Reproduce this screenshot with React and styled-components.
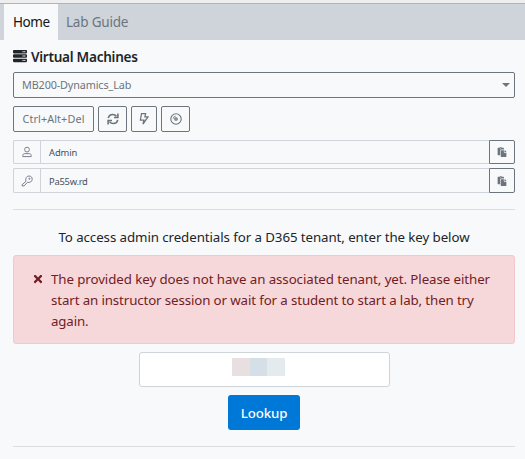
import React from "react";
import styled, { createGlobalStyle } from "styled-components";
import { FaServer, FaPaste, FaTimes } from "react-icons/fa";

const GlobalStyle = createGlobalStyle`
  *, *::before, *::after { box-sizing: border-box; }
  body {
    margin: 0;
    background: #f8f9fb;
    color: #212529;
    font-family: "Noto Sans", "Open Sans", sans-serif;
    font-size: 14px;
    line-height: 21px;
    overflow: hidden;
  }
  svg { display: block; flex: none; }
`;

const Page = styled.main`
  height: 459px;
  display: flex;
  flex-direction: column;
`;

const TopEdge = styled.div`
  height: 4px;
  background: #eeeeee;
  border-bottom: 1px solid #b1b5b9;
`;

const TabBar = styled.nav`
  display: flex;
  height: 36px;
  padding-left: 4px;
  background: #ced4da;
`;

const Tab = styled.a`
  display: flex;
  align-items: center;
  padding: 0 8px ${(p) => (p.$active ? "0 9px" : "0 8px")};
  font-size: 13.5px;
  letter-spacing: ${(p) => (p.$active ? "-0.4px" : "-0.2px")};
  white-space: nowrap;
  color: ${(p) => (p.$active ? "#111418" : "#6c757d")};
  background: ${(p) => (p.$active ? "#f8f9fb" : "transparent")};
  width: ${(p) => p.$width};
`;

const Content = styled.section`
  display: flex;
  flex-direction: column;
  padding: 0 10px 0 13px;
`;

const Heading = styled.h1`
  display: flex;
  align-items: center;
  gap: 4px;
  height: 32px;
  margin: 0;
  font-size: 13.6px;
  font-weight: 600;
  letter-spacing: -0.28px;
`;

const Select = styled.div`
  display: flex;
  align-items: center;
  justify-content: space-between;
  height: 26px;
  padding: 0 4px 1px 8px;
  border: 1px solid #6c757d;
  border-radius: 2px;
  color: #6c757d;
  font-size: 10.8px;
  letter-spacing: -0.12px;
`;

const Caret = styled.span`
  border: 4px solid transparent;
  border-top-color: #6c757d;
  border-bottom: 0;
`;

const Toolbar = styled.div`
  display: flex;
  gap: 4px;
  margin: 8px 0;
`;

const ToolButton = styled.button`
  display: flex;
  align-items: center;
  justify-content: center;
  width: ${(p) => p.$width}px;
  height: 26px;
  padding: 0 0 1px;
  border: 1px solid #6c757d;
  border-radius: 2px;
  background: transparent;
  color: #6c757d;
  font: 10.8px "Noto Sans", sans-serif;
  letter-spacing: 0.12px;
  white-space: nowrap;
`;

const Field = styled.div`
  display: flex;
  height: ${(p) => p.$height}px;
  margin-bottom: 4px;
`;

const FieldIcon = styled.span`
  display: flex;
  align-items: center;
  justify-content: center;
  width: 27px;
  border: 1px solid #ced4da;
  border-radius: 2px 0 0 2px;
  border-right: 0;
  color: #7d7f91;
`;

const FieldValue = styled.span`
  flex: 1;
  display: flex;
  align-items: center;
  padding: 1px 0 0 8px;
  border: 1px solid #ced4da;
  border-right: 0;
  color: #495057;
  font-size: 9.4px;
  letter-spacing: ${(p) => p.$spacing || "-0.1px"};
`;

const CopyButton = styled.button`
  display: flex;
  align-items: center;
  justify-content: center;
  width: 26px;
  padding: 0;
  border: 1px solid #6c757d;
  border-radius: 0 2px 2px 0;
  background: transparent;
  color: #6c757d;
`;

const Rule = styled.hr`
  width: 100%;
  height: 1px;
  margin: ${(p) => p.$top}px 0 0;
  border: 0;
  background: #dcdee1;
`;

const Prompt = styled.p`
  margin: 17px 0 7px;
  text-align: center;
  font-size: 13.3px;
  letter-spacing: -0.08px;
  white-space: nowrap;
`;

const Alert = styled.div`
  display: flex;
  gap: 7px;
  height: 89px;
  padding: 13px 0 0 18px;
  border: 1px solid #f5c6cb;
  border-radius: 3px;
  background: #f6d7da;
  color: #721c24;
  font-size: 13.3px;
  white-space: nowrap;

  svg { margin-top: 4px; }
`;

const Lines = styled.div`
  display: flex;
  flex-direction: column;
`;

const Line = styled.span`
  letter-spacing: ${(p) => p.$spacing}px;
`;

const KeyInput = styled.div`
  align-self: center;
  display: flex;
  justify-content: center;
  width: 251px;
  height: 35px;
  margin-top: 8px;
  padding: 5px 12px 0 0;
  border: 1px solid #ced4da;
  border-radius: 3px;
  background: #fff;
`;

const Block = styled.span`
  width: ${(p) => p.$width}px;
  height: 18px;
  background: ${(p) => p.$color};
`;

const Lookup = styled.button`
  align-self: center;
  width: 72px;
  height: 35px;
  margin-top: 8px;
  padding: 1px 0 0;
  border: 0;
  border-radius: 3px;
  background: #0078d7;
  color: #fff;
  font: 500 13.3px "Noto Sans", sans-serif;
  letter-spacing: -0.15px;
`;

const stroke = { fill: "none", stroke: "currentColor", strokeWidth: 1 };

const RefreshIcon = () => (
  <svg width="12" height="12" viewBox="0 0 12 12" {...stroke} strokeWidth="1.6">
    <path d="M1.3 5.2C1.7 2.9 3.6 1.5 5.8 1.5c1.5 0 2.7.6 3.7 1.8M10.7 6.800c-.4 2.3-2.3 3.7-4.5 3.7-1.5 0-2.7-.6-3.7-1.8" />
    <path d="M10.900.6v3.900H7M1.100 11.400V7.500H5" />
  </svg>
);
const BoltIcon = () => (
  <svg width="10" height="12" viewBox="0 0 10 12" {...stroke} strokeWidth="1.25">
    <path d="M2.500.7h4.100L5.900 3.900h3L4 11.200 4.900 7H1.400z" />
  </svg>
);
const DiscIcon = () => (
  <svg width="12" height="12" viewBox="0 0 12 12" {...stroke}>
    <circle cx="6" cy="6" r="5.2" strokeWidth="1.1" />
    <circle cx="6" cy="6" r="1.2" strokeWidth="1.3" />
    <path d="M3.100 5.800A2.900 2.900 0 0 1 5.800 3.100" strokeWidth=".8" />
  </svg>
);
const UserIcon = () => (
  <svg width="10" height="12" viewBox="0 0 10 12" {...stroke}>
    <circle cx="5" cy="3.6" r="2.4" />
    <path d="M.8 10.600V9.500c0-1.200.9-1.900 2-1.900h4.400c1.100 0 2 .7 2 1.900v1.100z" />
  </svg>
);
const KeyIcon = () => (
  <svg width="12" height="12" viewBox="0 0 12 12" {...stroke}>
    <path d="M4.900 6.300C4.200 3.500 5.400 1 8 1c2 0 3.200 1.300 3.200 3.100C11.200 6.600 8.900 8 6.400 7.300L3.100 10.900H1V9.800z" />
    <circle cx="8.400" cy="3.700" r=".6" />
  </svg>
);

const LINES = [
  { text: "The provided key does not have an associated tenant, yet. Please either", spacing: -0.08 },
  { text: "start an instructor session or wait for a student to start a lab, then try", spacing: -0.12 },
  { text: "again.", spacing: -0.15 },
];

export default function App() {
  return (
    <Page>
      <GlobalStyle />
      <TopEdge />
      <TabBar>
        <Tab $active $width="54px">Home</Tab>
        <Tab $width="80px">Lab Guide</Tab>
      </TabBar>
      <Content>
        <Heading><FaServer size={14} />Virtual Machines</Heading>
        <Select>MB200-Dynamics_Lab<Caret /></Select>
        <Toolbar>
          <ToolButton $width={81}>Ctrl+Alt+Del</ToolButton>
          <ToolButton $width={29} aria-label="Refresh"><RefreshIcon /></ToolButton>
          <ToolButton $width={26} aria-label="Power"><BoltIcon /></ToolButton>
          <ToolButton $width={29} aria-label="Disc"><DiscIcon /></ToolButton>
        </Toolbar>
        <Field $height={24}>
          <FieldIcon><UserIcon /></FieldIcon>
          <FieldValue>Admin</FieldValue>
          <CopyButton aria-label="Copy user name"><FaPaste size={10} /></CopyButton>
        </Field>
        <Field $height={25}>
          <FieldIcon><KeyIcon /></FieldIcon>
          <FieldValue $spacing="-0.25px">Pa55w.rd</FieldValue>
          <CopyButton aria-label="Copy password"><FaPaste size={10} /></CopyButton>
        </Field>
        <Rule $top={12} />
        <Prompt>To access admin credentials for a D365 tenant, enter the key below</Prompt>
        <Alert>
          <FaTimes size={12} />
          <Lines>
            {LINES.map((line) => (
              <Line key={line.text} $spacing={line.spacing}>{line.text}</Line>
            ))}
          </Lines>
        </Alert>
        <KeyInput>
          <Block $width={18} $color="#e8dfe0" />
          <Block $width={17} $color="#d4dfe8" />
          <Block $width={18} $color="#e3ebef" />
        </KeyInput>
        <Lookup>Lookup</Lookup>
        <Rule $top={16} />
      </Content>
    </Page>
  );
}
